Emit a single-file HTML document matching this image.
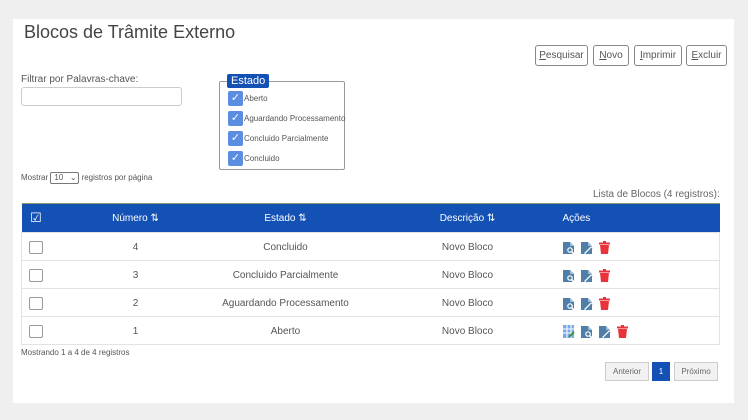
<!DOCTYPE html>
<html><head><style>
*{box-sizing:border-box;margin:0;padding:0}
body{width:748px;height:420px;background:#efefef;font-family:"Liberation Sans",sans-serif;color:#333;position:relative;overflow:hidden}
.panel{position:absolute;left:13px;top:19px;width:721px;height:384px;background:#fff}
.a{position:absolute}
h1{position:absolute;left:24px;top:22px;font-size:18px;font-weight:normal;color:#444}
.btn{position:absolute;top:45px;height:21px;border:1px solid #888;border-radius:3px;font-size:10px;color:#555;line-height:19px;text-align:center;background:#fff}
.cb{width:15px;height:15px;background:#5b8ee0;border-radius:2px;position:absolute;left:8px;color:#fff;font-size:11px;line-height:15px;text-align:center}
.lbl{position:absolute;left:24px;font-size:8px;color:#555}
table{position:absolute;left:21px;top:203px;width:699px;border-collapse:collapse;font-size:10px;color:#555;table-layout:fixed}
thead tr{background:#1351b4;color:#fff;height:29px;border-top:1px solid #8a9a6a}
td,th{font-weight:normal;text-align:center;border-bottom:1px solid #e3e3e3}
tbody tr{height:28px}
tbody td{padding-top:2px}
tbody td:first-child{border-left:1px solid #e3e3e3}
tbody td:last-child{border-right:1px solid #e3e3e3}
.ck{display:inline-block;width:14px;height:13px;border:1px solid #999;border-radius:2px;vertical-align:middle}
.ic{display:inline-block;vertical-align:middle;margin-right:6px}
.pg{position:absolute;top:362px;height:19px;font-size:8px;line-height:17px;text-align:center;border:1px solid #ccc;background:#f2f2f2;color:#666}
.d{padding-left:34px}
.ac{text-align:left;padding-left:12px}
</style></head><body>
<div class="panel"></div>
<h1>Blocos de Trâmite Externo</h1>
<div class="btn" style="left:535px;width:53px"><u>P</u>esquisar</div>
<div class="btn" style="left:593px;width:36px"><u>N</u>ovo</div>
<div class="btn" style="left:634px;width:48px"><u>I</u>mprimir</div>
<div class="btn" style="left:686px;width:41px"><u>E</u>xcluir</div>
<div class="a" style="left:21px;top:74px;font-size:10px;color:#555">Filtrar por Palavras-chave:</div>
<div class="a" style="left:21px;top:87px;width:161px;height:19px;border:1px solid #ccc;border-radius:3px"></div>
<div class="a" style="left:219px;top:81px;width:126px;height:89px;border:1px solid #999;border-radius:2px">
 <div class="a" style="left:7px;top:-8px;background:#1351b4;color:#fff;font-size:11px;padding:0 4px;line-height:14px;border-radius:2px">Estado</div>
 <div class="cb" style="top:9px">✓</div><div class="lbl" style="top:12px">Aberto</div>
 <div class="cb" style="top:29px">✓</div><div class="lbl" style="top:32px;white-space:nowrap">Aguardando Processamento</div>
 <div class="cb" style="top:49px">✓</div><div class="lbl" style="top:52px">Concluido Parcialmente</div>
 <div class="cb" style="top:69px">✓</div><div class="lbl" style="top:72px">Concluido</div>
</div>
<div class="a" style="left:21px;top:172px;font-size:8px;color:#555">Mostrar <span style="display:inline-block;width:29px;height:12px;border:1px solid #777;border-radius:2px;font-size:8px;line-height:10px;padding-left:3px;vertical-align:middle">10 &nbsp;&nbsp;⌄</span> registros por página</div>
<div class="a" style="left:593px;top:189px;font-size:10px;color:#666">Lista de Blocos (4 registros):</div>
<table>
<colgroup><col style="width:29px"><col style="width:170px"><col style="width:130px"><col style="width:200px"><col></colgroup>
<thead><tr><th style="font-size:13px">☑</th><th>Número ⇅</th><th>Estado ⇅</th><th class="d">Descrição ⇅</th><th class="ac">Ações</th></tr></thead>
<tbody>
<tr><td><span class="ck"></span></td><td>4</td><td>Concluido</td><td class="d">Novo Bloco</td><td class="ac acts"></td></tr>
<tr><td><span class="ck"></span></td><td>3</td><td>Concluido Parcialmente</td><td class="d">Novo Bloco</td><td class="ac acts"></td></tr>
<tr><td><span class="ck"></span></td><td>2</td><td>Aguardando Processamento</td><td class="d">Novo Bloco</td><td class="ac acts"></td></tr>
<tr><td><span class="ck"></span></td><td>1</td><td>Aberto</td><td class="d">Novo Bloco</td><td class="ac acts4"></td></tr>
</tbody></table>
<div class="a" style="left:21px;top:348px;font-size:8px;color:#555">Mostrando 1 a 4 de 4 registros</div>
<div class="pg" style="left:605px;width:44px">Anterior</div>
<div class="pg" style="left:652px;width:18px;background:#1351b4;color:#fff;border-color:#1351b4">1</div>
<div class="pg" style="left:674px;width:44px">Próximo</div>
<script>
var doc='<svg class="ic" width="12" height="14" viewBox="0 0 12 14"><path d="M0 1h7l4 4v8H0z" fill="#4f7fa8"/><path d="M7 1v4h4" fill="#9fbcd6"/><circle cx="7" cy="9" r="2.8" fill="#fff"/><circle cx="7" cy="9" r="1.6" fill="#4f7fa8"/><path d="M8.5 10.5l2.5 2.5" stroke="#fff" stroke-width="1.6"/></svg>';
var ed='<svg class="ic" width="12" height="14" viewBox="0 0 12 14"><path d="M0 1h7l4 4v8H0z" fill="#4f7fa8"/><path d="M7 1v4h4" fill="#9fbcd6"/><path d="M4 13l7-7" stroke="#fff" stroke-width="2.5"/><path d="M5 13l6-6" stroke="#4f7fa8" stroke-width="1.4"/></svg>';
var tr='<svg class="ic" width="11" height="13" viewBox="0 0 11 13"><rect x="0" y="1.5" width="11" height="2" fill="#e8333a"/><rect x="4" y="0" width="3" height="2" fill="#e8333a"/><path d="M1 4h9l-1 9H2z" fill="#e8333a"/></svg>';
var gr='<svg class="ic" width="12" height="14" viewBox="0 0 12 14"><rect width="11" height="13" fill="#7aa8e8"/><path d="M0 4h11M0 8h11M4 0v13M8 0v13" stroke="#fff"/><path d="M6 12l5-5" stroke="#3a9a3a" stroke-width="2"/></svg>';
document.querySelectorAll('.acts').forEach(e=>e.innerHTML=doc+ed+tr);
document.querySelectorAll('.acts4').forEach(e=>e.innerHTML=gr+doc+ed+tr);
</script>
</body></html>
